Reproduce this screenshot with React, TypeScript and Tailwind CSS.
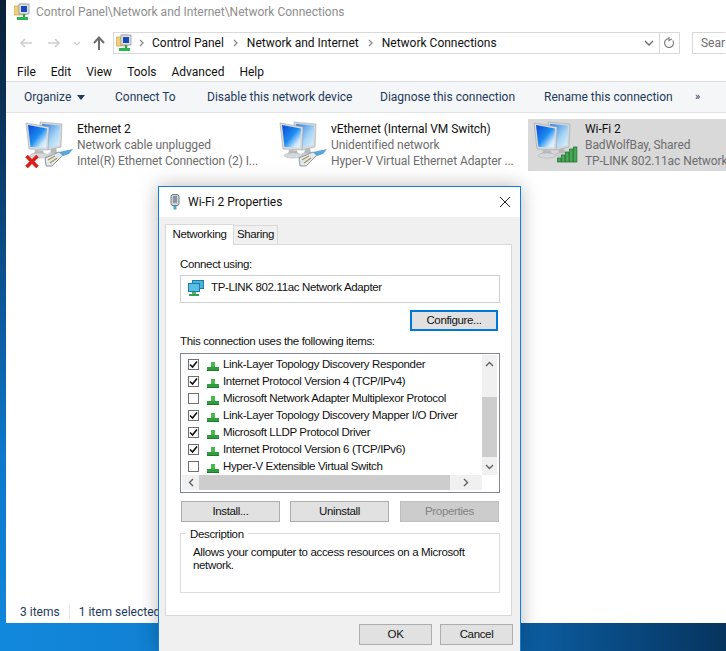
import React from "react";

const ITEMS = [
  { label: "Link-Layer Topology Discovery Responder", on: true },
  { label: "Internet Protocol Version 4 (TCP/IPv4)", on: true },
  { label: "Microsoft Network Adapter Multiplexor Protocol", on: false },
  { label: "Link-Layer Topology Discovery Mapper I/O Driver", on: true },
  { label: "Microsoft LLDP Protocol Driver", on: true },
  { label: "Internet Protocol Version 6 (TCP/IPv6)", on: true },
  { label: "Hyper-V Extensible Virtual Switch", on: false },
];

const Computers = () => (
  <>
    <defs>
      <linearGradient id="screenFront" x1="0" y1="0" x2="1" y2="1">
        <stop offset="0" stopColor="#0b46d6" />
        <stop offset="0.5" stopColor="#1c8df0" />
        <stop offset="0.8" stopColor="#cfe8fb" />
        <stop offset="1" stopColor="#eef7fd" />
      </linearGradient>
      <linearGradient id="screenBack" x1="0" y1="0" x2="1" y2="1">
        <stop offset="0" stopColor="#2a78e0" />
        <stop offset="0.6" stopColor="#a8d6f6" />
        <stop offset="1" stopColor="#e8f4fc" />
      </linearGradient>
    </defs>
    {/* back monitor */}
    <path d="M15 2 L37 4 L36 27 L24 30 L15 26 Z" fill="#d4d7da" stroke="#a3a8ad" strokeWidth="0.6" />
    <path d="M17 4 L35 5.5 L34.5 25 L21 28 Z" fill="url(#screenBack)" />
    <path d="M26 29 L31 28 L32 33 L25 34 Z" fill="#b4b8bc" />
    <ellipse cx="29" cy="34.5" rx="6.5" ry="2" fill="#cfd1d3" stroke="#a8abae" strokeWidth="0.4" />
    {/* front monitor */}
    <path d="M1 3 L24 7 L23 30 L4 29 Z" fill="#d9dcdf" stroke="#9ba1a6" strokeWidth="0.6" />
    <path d="M3 5 L22 8.5 L21 27.5 L5.5 27 Z" fill="url(#screenFront)" />
    <path d="M10 30 L18 30.5 L19 34 L9 34 Z" fill="#b8bcc0" />
    <ellipse cx="14" cy="35.5" rx="9" ry="2.6" fill="#d6d8da" stroke="#a8abae" strokeWidth="0.5" />
  </>
);

const EthernetIcon = ({ broken }: { broken?: boolean }) => (
  <svg width="48" height="48" viewBox="0 0 48 48" className="shrink-0">
    <Computers />
    <path d="M20 38 L34 32 L38 35 L27 46 L21 46 Z" fill="#e3e8ed" stroke="#75838f" strokeWidth="0.8" />
    <path d="M23 40 L30 36 M25 43 L32 38" stroke="#a9924e" strokeWidth="1.1" />
    <path d="M34 32 L48 29 L44 34 L38 36 Z" fill="#5aa6d8" />
    {broken && (
      <path d="M1.5 36 L12.5 47 M12.5 36 L1.5 47" stroke="#d8201c" strokeWidth="3.6" />
    )}
  </svg>
);

const WifiIcon = () => (
  <svg width="48" height="48" viewBox="0 0 48 48" className="shrink-0">
    <Computers />
    <g fill="#45a852" stroke="#1f6b2c" strokeWidth="0.7">
      <rect x="24.5" y="38" width="3.4" height="4" />
      <rect x="28.5" y="35" width="3.4" height="7" />
      <rect x="32.5" y="32" width="3.4" height="10" />
      <rect x="36.5" y="29" width="3.4" height="13" />
      <rect x="40.5" y="27" width="3.4" height="15" />
    </g>
  </svg>
);

const FolderNet = () => (
  <svg width="16" height="18" viewBox="0 0 16 18" className="shrink-0">
    <path d="M0 3 H5 L6 1 H12 V12 H0 Z" fill="#f3cf7a" stroke="#c9a24a" strokeWidth="0.7" />
    <rect x="5" y="1" width="10" height="10" fill="#dfe3e8" stroke="#7f8a96" strokeWidth="0.7" />
    <rect x="7" y="3" width="6" height="6" fill="#1b48b8" />
    <rect x="9" y="11" width="2" height="3" fill="#27a84a" />
    <rect x="3" y="14" width="11" height="3" fill="#27b650" />
  </svg>
);

const Crumb = () => (
  <svg width="6" height="8" viewBox="0 0 6 8" className="shrink-0">
    <path d="M1 1 L4 4 L1 7" fill="none" stroke="#8a8a8a" strokeWidth="1.3" />
  </svg>
);

const GreenNet = () => (
  <svg width="14" height="11" viewBox="0 0 14 11" className="shrink-0">
    <rect x="5" y="1" width="4" height="5" fill="#4ab84e" />
    <rect x="1" y="6" width="12" height="4" fill="#2e9e3c" />
    <rect x="1" y="9" width="12" height="1" fill="#1e7a2c" />
  </svg>
);

const Adapter = () => (
  <svg width="16" height="16" viewBox="0 0 16 16" className="shrink-0">
    <rect x="4.5" y="0.5" width="11" height="8" fill="#4bb2d8" stroke="#1c7ea8" />
    <rect x="0.5" y="3.5" width="11" height="8" fill="#57c0e4" stroke="#1c7ea8" />
    <rect x="4" y="12" width="4" height="2" fill="#57b06a" />
    <rect x="1" y="14" width="10" height="2" fill="#3aa04e" />
  </svg>
);

const Checkbox = ({ on }: { on: boolean }) => (
  <span className="flex h-[11px] w-[11px] shrink-0 items-center justify-center border border-[#707070] bg-white">
    {on && (
      <svg width="9" height="9" viewBox="0 0 9 9">
        <path d="M1 4.5 L3.5 7 L8 1.5" fill="none" stroke="#111" strokeWidth="1.6" />
      </svg>
    )}
  </span>
);

const WinButton = ({
  label,
  disabled,
  focused,
  className,
}: {
  label: string;
  disabled?: boolean;
  focused?: boolean;
  className?: string;
}) => (
  <div
    className={
      "flex h-[21px] shrink-0 items-center justify-center text-[11.5px] tracking-[-0.35px] " +
      (focused
        ? "border-2 border-[#0078d7] bg-[#e1e1e1] text-[#111] "
        : disabled
          ? "border border-[#bfbfbf] bg-[#cccccc] text-[#838383] "
          : "border border-[#adadad] bg-[#e1e1e1] text-[#111] ") +
      (className || "")
    }
  >
    {label}
  </div>
);

const Connection = ({
  name,
  status,
  device,
  icon,
  selected,
}: {
  name: string;
  status: string;
  device: string;
  icon: React.ReactNode;
  selected?: boolean;
}) => (
  <div
    className={
      "flex h-[52px] items-start gap-[4px] overflow-hidden pl-[5px] pt-px " +
      (selected ? "bg-[#d9d9d9]" : "")
    }
  >
    {icon}
    <div className="mt-[1px] whitespace-nowrap text-[12px] leading-[16px] tracking-[-0.08px] text-[#6d6d6d]">
      <div className="text-[#111]">{name}</div>
      <div>{status}</div>
      <div>{device}</div>
    </div>
  </div>
);

export default function App() {
  return (
    <div
      className="relative h-[651px] w-[726px] overflow-hidden bg-[linear-gradient(180deg,#0a2036_0%,#0a3a68_25%,#0c78cc_70%,#1288dc_100%)] text-[#111]"
      style={{ fontFamily: 'Roboto, "Noto Sans", sans-serif' }}
    >
      <div className="absolute bottom-0 left-0 right-0 h-[28px] bg-[linear-gradient(90deg,#1288dc_0%,#0f78c8_45%,#0b5a9c_75%,#06345e_100%)]" />

      {/* explorer window */}
      <div className="relative ml-[6px] flex h-[623px] w-[720px] flex-col bg-white">
        <div className="flex h-[24px] items-center gap-[6px] pl-[8px] text-[12px] text-[#8e8e8e]">
          <FolderNet />
          <span>Control Panel\Network and Internet\Network Connections</span>
        </div>

        <div className="mt-[8px] flex h-[22px] items-center pl-[12px]">
          <svg width="90" height="20" viewBox="0 0 90 20" className="shrink-0">
            <path d="M14 10 H3 M7 6 L3 10 L7 14" fill="none" stroke="#cfcfcf" strokeWidth="1.6" />
            <path d="M30 10 H41 M37 6 L41 10 L37 14" fill="none" stroke="#cfcfcf" strokeWidth="1.6" />
            <path d="M56 9 L59 12 L62 9" fill="none" stroke="#cfcfcf" strokeWidth="1.2" />
            <path d="M81 17 V5 M76 10 L81 4.5 L86 10" fill="none" stroke="#6e6e6e" strokeWidth="2" />
          </svg>
          <div className="ml-[5px] flex h-[22px] w-[571px] items-center border border-[#d9d9d9] pl-[2px] text-[12px]">
            <FolderNet />
            <span className="ml-[7px]"><Crumb /></span>
            <span className="ml-[7px]">Control Panel</span>
            <span className="ml-[9px]"><Crumb /></span>
            <span className="ml-[8px]">Network and Internet</span>
            <span className="ml-[9px]"><Crumb /></span>
            <span className="ml-[8px]">Network Connections</span>
            <div className="ml-auto flex h-full items-center">
              <svg width="12" height="8" viewBox="0 0 12 8" className="mr-[4px]">
                <path d="M2 2 L6 6 L10 2" fill="none" stroke="#6e6e6e" strokeWidth="1.4" />
              </svg>
              <div className="flex h-full w-[20px] items-center justify-center border-l border-[#d9d9d9]">
                <svg width="12" height="12" viewBox="0 0 12 12">
                  <path d="M9.8 3.5 A4.5 4.5 0 1 1 6 1.5 M6 0 L6 3.5 L9 2" fill="none" stroke="#808080" strokeWidth="1.2" />
                </svg>
              </div>
            </div>
          </div>
          <div className="ml-[12px] flex h-[22px] flex-1 items-center border border-y-[#d9d9d9] border-l-[#d9d9d9] border-r-transparent pl-[8px] text-[12px] text-[#6d6d6d]">
            Sear
          </div>
        </div>

        <div className="mt-[8px] flex h-[20px] items-center gap-[15px] border-b border-[#dcdcdc] pl-[11px] text-[12px]">
          <span>File</span>
          <span>Edit</span>
          <span>View</span>
          <span>Tools</span>
          <span>Advanced</span>
          <span>Help</span>
        </div>

        <div className="flex h-[31px] items-center whitespace-nowrap border-b border-[#e0e2e4] bg-[#f5f6f7] text-[12px] text-[#1e395b]">
          <span className="ml-[18px] w-[53px]">Organize</span>
          <svg width="8" height="5" viewBox="0 0 8 5" className="shrink-0">
            <path d="M0 0 H8 L4 5 Z" fill="#1e395b" />
          </svg>
          <span className="ml-[30px] w-[92px]">Connect To</span>
          <span className="w-[173px]">Disable this network device</span>
          <span className="w-[164px]">Diagnose this connection</span>
          <span className="w-[151px]">Rename this connection</span>
          <span className="text-[11px]">»</span>
        </div>

        <div className="ml-[14px] mt-[6px] grid grid-cols-[254px_254px_198px]">
          <Connection
            name="Ethernet 2"
            status="Network cable unplugged"
            device="Intel(R) Ethernet Connection (2) I..."
            icon={<EthernetIcon broken />}
          />
          <Connection
            name="vEthernet (Internal VM Switch)"
            status="Unidentified network"
            device="Hyper-V Virtual Ethernet Adapter ..."
            icon={<EthernetIcon />}
          />
          <Connection
            selected
            name="Wi-Fi 2"
            status="BadWolfBay, Shared"
            device="TP-LINK 802.11ac Network"
            icon={<WifiIcon />}
          />
        </div>

        <div className="mt-auto flex h-[22px] items-center pl-[14px] text-[12px] text-[#1e395b]">
          <span>3 items</span>
          <span className="ml-[9px] h-[14px] w-px bg-[#e6e6e6]" />
          <span className="ml-[9px] whitespace-nowrap">1 item selected</span>
        </div>
      </div>

      {/* properties dialog, floats over the explorer */}
      <div className="absolute left-[158px] top-[186px] flex h-[466px] w-[363px] flex-col border border-[#0f7fd6] bg-[#f0f0f0] shadow-[0_0_18px_rgba(0,0,0,0.28)]">
        <div className="flex h-[30px] items-center bg-white pl-[11px] pr-[9px] text-[12px]">
          <svg width="10" height="16" viewBox="0 0 10 16" className="shrink-0">
            <rect x="1" y="0.5" width="8" height="11" rx="2" fill="#d0d4d8" stroke="#6f7a84" />
            <rect x="3" y="2" width="4" height="7" fill="#8a97a3" />
            <rect x="3.5" y="12" width="3" height="3.5" fill="#49a6d8" />
          </svg>
          <span className="ml-[8px]">Wi-Fi 2 Properties</span>
          <svg width="12" height="12" viewBox="0 0 12 12" className="ml-auto">
            <path d="M1 1 L11 11 M11 1 L1 11" stroke="#222" strokeWidth="1" />
          </svg>
        </div>

        <div
          className="relative z-10 ml-[6px] mt-[7px] flex h-[20px] items-end text-[11.5px] tracking-[-0.35px]"
          style={{ fontFamily: '"Liberation Sans", Arial, sans-serif' }}
        >
          <div className="-mb-px flex h-[21px] w-[69px] items-center justify-center border border-b-0 border-[#d9d9d9] bg-white">
            Networking
          </div>
          <div className="flex h-[19px] w-[44px] items-center justify-center border border-b-0 border-l-0 border-[#d9d9d9] bg-[#f0f0f0]">
            Sharing
          </div>
        </div>

        <div
          className="ml-[6px] flex h-[372px] w-[347px] flex-col border border-[#d9d9d9] bg-white px-[14px] text-[11.5px] tracking-[-0.35px]"
          style={{ fontFamily: '"Liberation Sans", Arial, sans-serif' }}
        >
          <div className="mt-[11px] h-[16px] leading-[16px]">Connect using:</div>
          <div className="mt-[3px] flex h-[28px] w-[320px] shrink-0 items-center gap-[7px] border border-[#d0d0d0] pb-[3px] pl-[7px]">
            <Adapter />
            <span>TP-LINK 802.11ac Network Adapter</span>
          </div>
          <WinButton label="Configure..." focused className="ml-[230px] mt-[7px] w-[88px]" />
          <div className="mt-[2px] h-[16px] leading-[16px]">This connection uses the following items:</div>

          <div className="mt-[4px] flex h-[140px] w-[320px] shrink-0 flex-col border border-[#828790] pl-px pr-[2px] pt-px">
            <div className="flex h-[120px]">
              <div className="flex min-w-0 flex-1 flex-col overflow-hidden pl-[6px] pt-px">
                {ITEMS.map((item) => (
                  <div key={item.label} className="flex h-[17px] shrink-0 items-center whitespace-nowrap">
                    <Checkbox on={item.on} />
                    <span className="ml-[7px] mt-[4px]">
                      <GreenNet />
                    </span>
                    <span className="ml-[3px]">{item.label}</span>
                  </div>
                ))}
              </div>
              <div className="flex w-[15px] shrink-0 flex-col bg-[#f0f0f0]">
                <div className="flex h-[17px] items-center justify-center">
                  <svg width="9" height="6" viewBox="0 0 9 6">
                    <path d="M1 5 L4.5 1.5 L8 5" fill="none" stroke="#606060" strokeWidth="1.4" />
                  </svg>
                </div>
                <div className="mt-[25px] h-[60px] bg-[#cdcdcd]" />
                <div className="mt-auto flex h-[17px] items-center justify-center">
                  <svg width="9" height="6" viewBox="0 0 9 6">
                    <path d="M1 1 L4.5 4.5 L8 1" fill="none" stroke="#606060" strokeWidth="1.4" />
                  </svg>
                </div>
              </div>
            </div>
            <div className="flex h-[15px] w-[300px] items-center bg-[#f0f0f0]">
              <div className="flex w-[17px] justify-center">
                <svg width="6" height="9" viewBox="0 0 6 9">
                  <path d="M5 1 L1.5 4.5 L5 8" fill="none" stroke="#606060" strokeWidth="1.4" />
                </svg>
              </div>
              <div className="h-full w-[251px] bg-[#cdcdcd]" />
              <div className="flex flex-1 justify-center">
                <svg width="6" height="9" viewBox="0 0 6 9">
                  <path d="M1 1 L4.5 4.5 L1 8" fill="none" stroke="#606060" strokeWidth="1.4" />
                </svg>
              </div>
            </div>
          </div>

          <div className="ml-px mt-[8px] flex gap-[10px]">
            <WinButton label="Install..." className="w-[99px]" />
            <WinButton label="Uninstall" className="w-[99px]" />
            <WinButton label="Properties" disabled className="ml-px w-[99px]" />
          </div>

          <div className="relative mt-[11px] h-[60px] w-[320px] shrink-0 border border-[#dcdcdc] px-[12px] pt-[12px] leading-[13px]">
            <span className="absolute -top-[7px] left-[5px] bg-white px-[4px] leading-[14px]">Description</span>
            Allows your computer to access resources on a Microsoft network.
          </div>
        </div>

        <div
          className="mt-[8px] flex justify-end gap-[8px] pr-[7px]"
          style={{ fontFamily: '"Liberation Sans", Arial, sans-serif' }}
        >
          <WinButton label="OK" className="w-[73px]" />
          <WinButton label="Cancel" className="w-[73px]" />
        </div>
      </div>
    </div>
  );
}
